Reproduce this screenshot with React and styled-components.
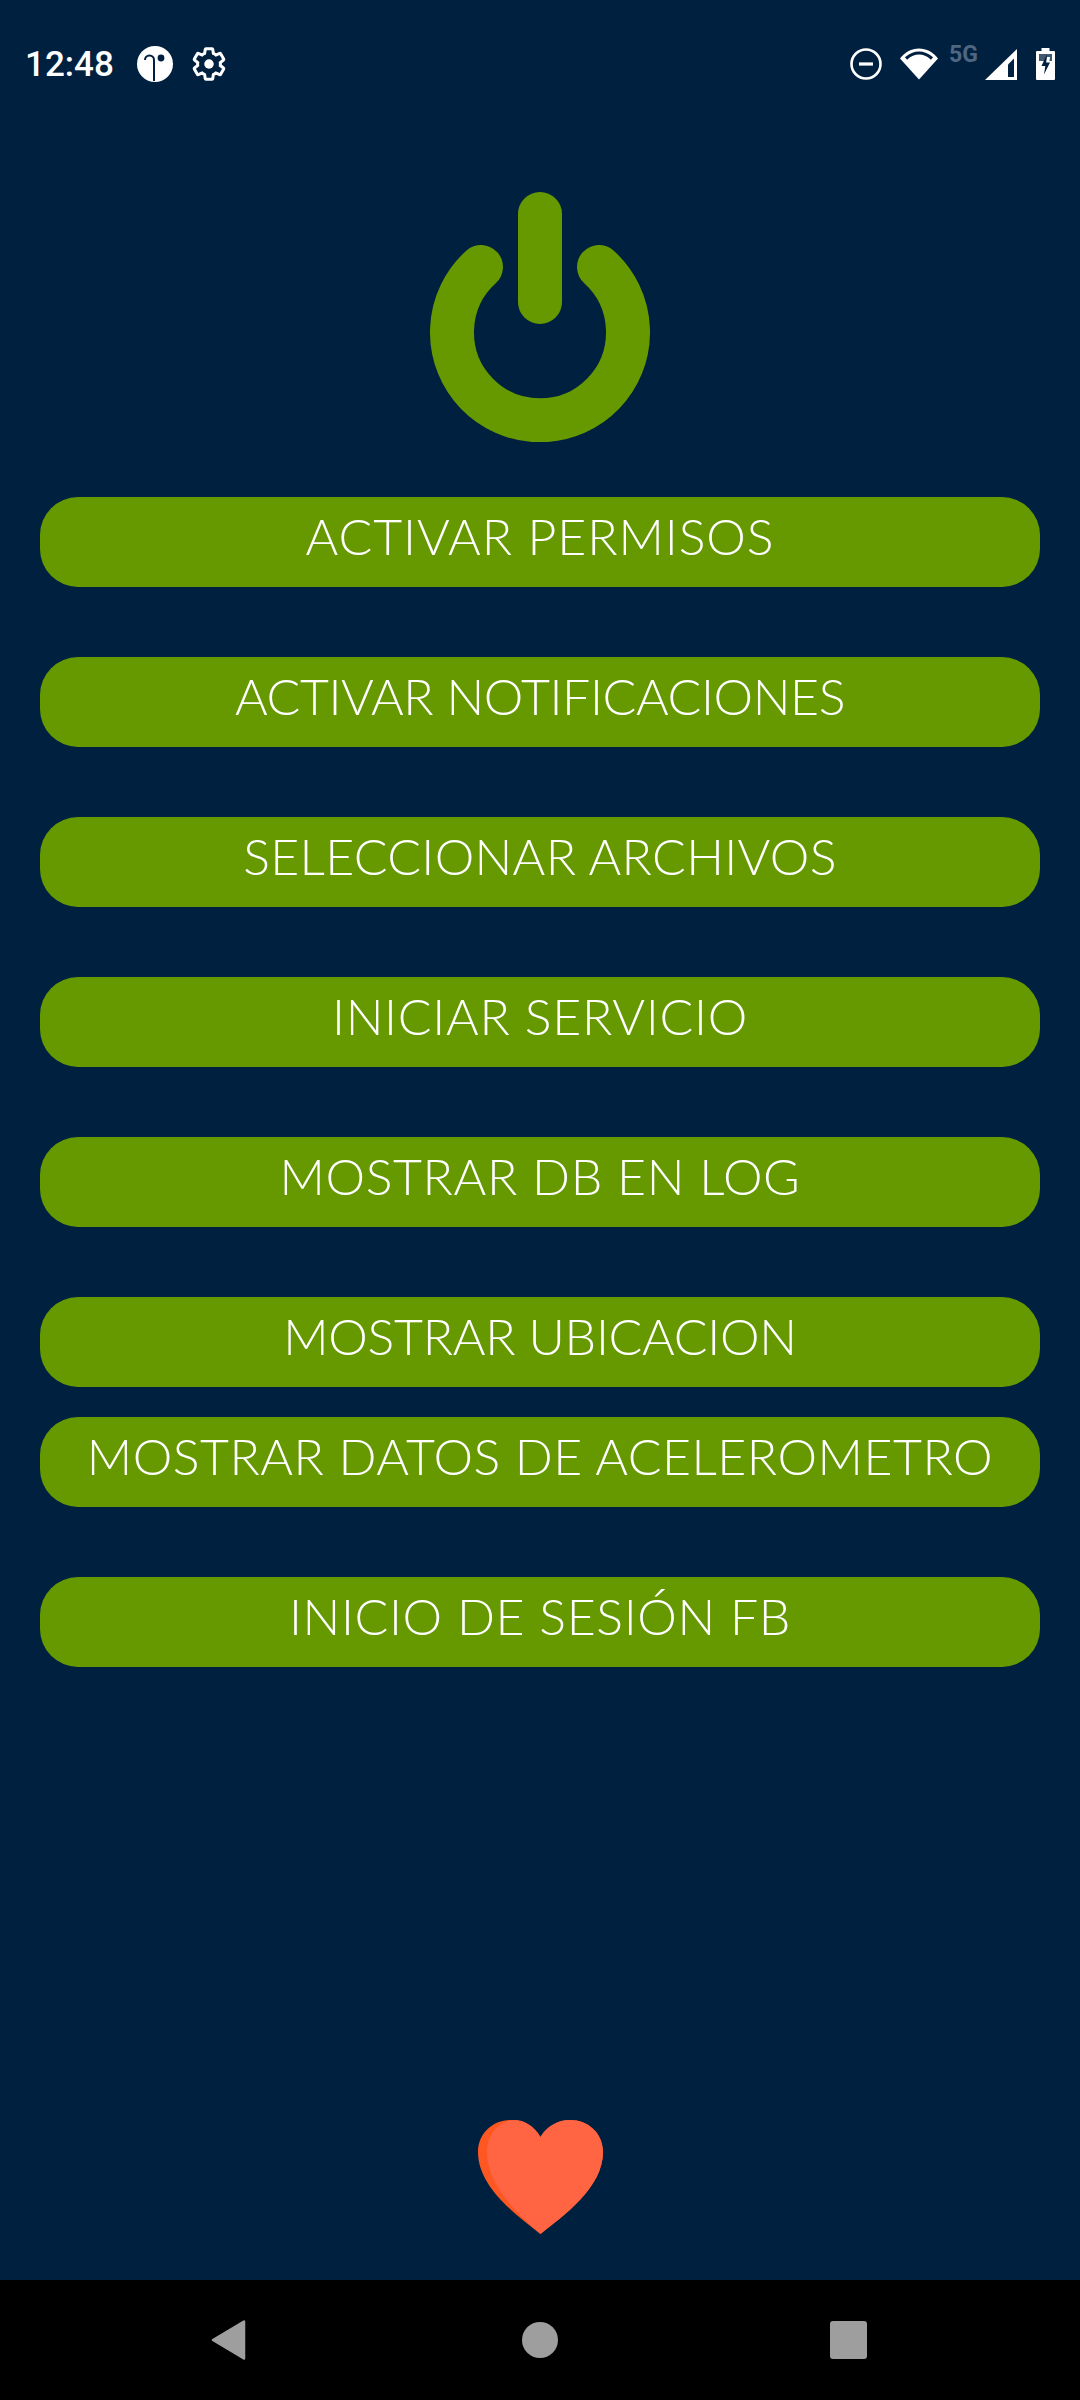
import React from "react";
import styled, { createGlobalStyle } from "styled-components";

const BUTTONS = [
  { label: "ACTIVAR PERMISOS", gap: 0, spacing: 0.9 },
  { label: "ACTIVAR NOTIFICACIONES", gap: 70, spacing: -0.4 },
  { label: "SELECCIONAR ARCHIVOS", gap: 70, spacing: 0.3 },
  { label: "INICIAR SERVICIO", gap: 70, spacing: 0.7 },
  { label: "MOSTRAR DB EN LOG", gap: 70, spacing: 0.6 },
  { label: "MOSTRAR UBICACION", gap: 70, spacing: -0.3 },
  { label: "MOSTRAR DATOS DE ACELEROMETRO", gap: 30, spacing: 0.5 },
  { label: "INICIO DE SESIÓN FB", gap: 70, spacing: 0.6 },
];

const App = () => {
  return (
    <>
      <GlobalStyle />
      <Screen>
        <StatusBar>
          <StatusGroup>
            <Clock>12:48</Clock>
            <AppIcon width="36" height="36" viewBox="0 0 36 36">
              <circle cx="18" cy="18" r="18" fill="#fff" />
              <path d="M17 35V14a4.5 4.5 0 0 0-9 0" fill="none" stroke="#002040" strokeWidth="2" />
              <circle cx="24" cy="12" r="3.4" fill="#002040" />
            </AppIcon>
            <GearIcon width="38" height="38" viewBox="0 0 24 24">
              <path
                d="M19.14 12.94c.04-.3.06-.61.06-.94 0-.32-.02-.64-.07-.94l2.03-1.58c.18-.14.23-.41.12-.61l-1.92-3.32c-.12-.22-.37-.29-.59-.22l-2.39.96c-.5-.38-1.03-.7-1.62-.94l-.36-2.54c-.04-.24-.24-.41-.48-.41h-3.84c-.24 0-.43.17-.47.41l-.36 2.54c-.59.24-1.13.57-1.62.94l-2.39-.96c-.22-.08-.47 0-.59.22L2.74 8.87c-.12.21-.08.47.12.61l2.03 1.58c-.05.3-.09.63-.09.94s.02.64.07.94l-2.03 1.58c-.18.14-.23.41-.12.61l1.92 3.32c.12.22.37.29.59.22l2.39-.96c.5.38 1.03.7 1.62.94l.36 2.54c.05.24.24.41.48.41h3.84c.24 0 .44-.17.47-.41l.36-2.54c.59-.24 1.13-.56 1.62-.94l2.39.96c.22.08.47 0 .59-.22l1.92-3.32c.12-.22.07-.47-.12-.61l-2.01-1.58z"
                fill="none"
                stroke="#fff"
                strokeWidth="1.9"
              />
              <circle cx="12" cy="12" r="3" fill="#fff" />
            </GearIcon>
          </StatusGroup>
          <StatusGroup>
            <DndIcon width="32" height="32" viewBox="0 0 32 32">
              <circle cx="16" cy="16" r="14.5" fill="none" stroke="#fff" strokeWidth="2.6" />
              <rect x="9" y="14.4" width="14" height="3.2" fill="#fff" />
            </DndIcon>
            <WifiIcon width="38" height="32" viewBox="0 0 38 32">
              <path d="M19 31.5 0 10.5C5 4 11.5 0.5 19 0.5s14 3.5 19 10z" fill="#fff" />
              <path d="M6 10.5C10 7 14.2 5 19 5s9 2 13 5.5" fill="none" stroke="#002040" strokeWidth="3.2" />
            </WifiIcon>
            <NetworkLabel>5G</NetworkLabel>
            <SignalIcon width="32" height="31" viewBox="0 0 32 31">
              <path d="M0 31 32 0v31z" fill="#fff" />
              <path d="M23 15.5 29 9.5V28h-6z" fill="#002040" />
            </SignalIcon>
            <BatteryIcon width="19" height="32" viewBox="0 0 19 32">
              <path d="M5.5 0h8v3H18a1 1 0 0 1 1 1v27a1 1 0 0 1-1 1H1a1 1 0 0 1-1-1V4a1 1 0 0 1 1-1h4.500z" fill="#fff" />
              <path d="M3 6h13v7h-2.600l.6-4-3 0-1 4H3z" fill="#002040" opacity="0.75" />
              <path d="M10.800 6.500 5.500 18h3.800l-1.300 8.500L14 14.500h-3.800z" fill="#002040" />
            </BatteryIcon>
          </StatusGroup>
        </StatusBar>

        <Main>
          <PowerIcon width="220" height="250" viewBox="0 0 220 250">
            <path
              d="M51 75a88 88 0 1 0 118 0"
              fill="none"
              stroke="#669900"
              strokeWidth="44"
              strokeLinecap="round"
            />
            <path d="M110 22v88" fill="none" stroke="#669900" strokeWidth="44" strokeLinecap="round" />
          </PowerIcon>

          <ButtonList>
            {BUTTONS.map((button) => (
              <ActionButton key={button.label} $gap={button.gap} $spacing={button.spacing}>
                {button.label}
              </ActionButton>
            ))}
          </ButtonList>

          <HeartIcon width="125" height="114" viewBox="0 0 125 114">
            <path
              d="M62.500 114C40 96 0 68 0 32 0 13 15 0 33 0c12 0 23 6 29.500 17C69 6 80 0 92 0c18 0 33 13 33 32 0 36-40 64-62.500 82z"
              fill="#ff5722"
            />
            <path
              d="M62.500 114C46 99 9 68 9 32 9 15 20 2 36 0c11 0 20 6 26.500 17C69 6 80 0 92 0c18 0 33 13 33 32 0 36-40 64-62.500 82z"
              fill="#ff6543"
            />
          </HeartIcon>
        </Main>

        <NavBar>
          <svg width="35" height="40" viewBox="0 0 35 40">
            <path d="M33 1.500v37L2 20z" fill="#9e9e9e" stroke="#9e9e9e" strokeWidth="2.500" strokeLinejoin="round" />
          </svg>
          <NavHome />
          <NavRecents />
        </NavBar>
      </Screen>
    </>
  );
};

export default App;

const GlobalStyle = createGlobalStyle`
  html, body {
    margin: 0;
    padding: 0;
    background: #002040;
  }
`;

const Screen = styled.div`
  width: 1080px;
  height: 2400px;
  display: flex;
  flex-direction: column;
  background-color: #002040;
  overflow: hidden;
`;

const StatusBar = styled.div`
  height: 128px;
  flex-shrink: 0;
  display: flex;
  align-items: center;
  justify-content: space-between;
  padding: 0 25px 0 25px;
`;

const StatusGroup = styled.div`
  display: flex;
  align-items: center;
`;

const Clock = styled.span`
  width: 87px;
  font-family: Roboto, sans-serif;
  font-size: 35px;
  font-weight: 500;
  color: #ffffff;
`;

const AppIcon = styled.svg`
  margin-left: 25px;
`;

const GearIcon = styled.svg`
  margin-left: 17px;
`;

const DndIcon = styled.svg`
  display: block;
`;

const WifiIcon = styled.svg`
  margin-left: 18px;
`;

const NetworkLabel = styled.span`
  width: 30px;
  margin-left: 11px;
  margin-bottom: 18px;
  font-family: Roboto, sans-serif;
  font-size: 23px;
  font-weight: 700;
  line-height: 24px;
  color: #4f6680;
`;

const SignalIcon = styled.svg`
  margin-left: 6px;
`;

const BatteryIcon = styled.svg`
  margin-left: 19px;
`;

const Main = styled.main`
  flex: 1;
  display: flex;
  flex-direction: column;
  align-items: center;
`;

const PowerIcon = styled.svg`
  display: block;
  margin-top: 64px;
  flex-shrink: 0;
`;

const ButtonList = styled.div`
  width: 100%;
  margin-top: 55px;
  padding: 0 40px;
  box-sizing: border-box;
  display: flex;
  flex-direction: column;
`;

const ActionButton = styled.button`
  height: 90px;
  margin-top: ${(props) => props.$gap}px;
  padding: 0 0 12px;
  border: none;
  border-radius: 38px;
  background-color: #669900;
  color: #ffffff;
  font-family: Lato, sans-serif;
  font-size: 50px;
  font-weight: 300;
  letter-spacing: ${(props) => props.$spacing}px;
  white-space: nowrap;
`;

const HeartIcon = styled.svg`
  display: block;
  margin-top: auto;
  margin-bottom: 46px;
`;

const NavBar = styled.nav`
  height: 120px;
  flex-shrink: 0;
  display: flex;
  align-items: center;
  justify-content: space-between;
  padding: 0 213px 0 211px;
  background-color: #000000;
`;

const NavHome = styled.div`
  width: 36px;
  height: 36px;
  margin-left: 4px;
  border-radius: 50%;
  background-color: #9e9e9e;
`;

const NavRecents = styled.div`
  width: 37px;
  height: 38px;
  border-radius: 3px;
  background-color: #9e9e9e;
`;
